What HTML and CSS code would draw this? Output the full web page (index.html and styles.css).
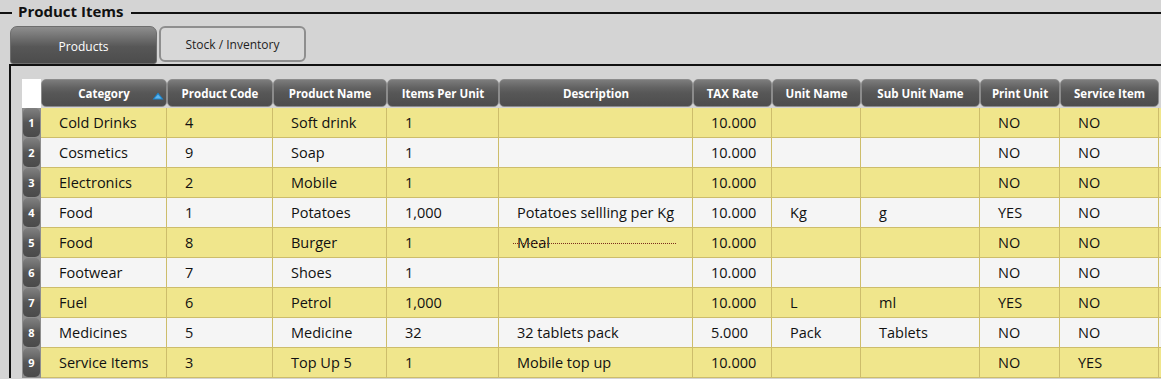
FILE: index.html
```html
<!DOCTYPE html>
<html>
<head>
    <link rel="stylesheet" href="styles.css">
</head>
<body>
<div class="group">
    <div class="legend-row">
        <span class="rule short"></span>
        <span class="legend">Product Items</span>
        <span class="rule long"></span>
    </div>
    <div class="tabs">
        <div class="tab active">Products</div>
        <div class="tab">Stock / Inventory</div>
    </div>
    <div class="panel">
        <table class="grid">
            <colgroup>
                <col class="c-rh">
                <col class="c-cat">
                <col class="c-code">
                <col class="c-name">
                <col class="c-ipu">
                <col class="c-desc">
                <col class="c-tax">
                <col class="c-unit">
                <col class="c-sub">
                <col class="c-print">
                <col class="c-serv">
                <col class="c-fill">
            </colgroup>
            <thead>
                <tr>
                    <th class="corner"></th>
                    <th class="sorted"><div class="hd">Category</div>
                        <svg class="sort-arrow" width="12" height="8" viewBox="0 0 12 8">
                            <polygon points="6,0.5 11.5,7.5 0.5,7.5" fill="#1b86d0"/>
                            <polygon points="6,2.5 9.5,6.5 2.5,6.5" fill="#5fb4ec"/>
                        </svg>
                    </th>
                    <th><div class="hd">Product Code</div></th>
                    <th><div class="hd">Product Name</div></th>
                    <th><div class="hd">Items Per Unit</div></th>
                    <th><div class="hd">Description</div></th>
                    <th><div class="hd">TAX Rate</div></th>
                    <th><div class="hd">Unit Name</div></th>
                    <th><div class="hd">Sub Unit Name</div></th>
                    <th><div class="hd">Print Unit</div></th>
                    <th><div class="hd">Service Item</div></th>
                    <th class="filler"></th>
                </tr>
            </thead>
            <tbody>
                <tr>
                    <td class="rh"><div class="num">1</div></td>
                    <td>Cold Drinks</td><td>4</td><td>Soft drink</td><td>1</td><td></td>
                    <td>10.000</td><td></td><td></td><td>NO</td><td>NO</td><td></td>
                </tr>
                <tr>
                    <td class="rh"><div class="num">2</div></td>
                    <td>Cosmetics</td><td>9</td><td>Soap</td><td>1</td><td></td>
                    <td>10.000</td><td></td><td></td><td>NO</td><td>NO</td><td></td>
                </tr>
                <tr>
                    <td class="rh"><div class="num">3</div></td>
                    <td>Electronics</td><td>2</td><td>Mobile</td><td>1</td><td></td>
                    <td>10.000</td><td></td><td></td><td>NO</td><td>NO</td><td></td>
                </tr>
                <tr>
                    <td class="rh"><div class="num">4</div></td>
                    <td>Food</td><td>1</td><td>Potatoes</td><td>1,000</td><td>Potatoes sellling per Kg</td>
                    <td>10.000</td><td>Kg</td><td>g</td><td>YES</td><td>NO</td><td></td>
                </tr>
                <tr>
                    <td class="rh"><div class="num">5</div></td>
                    <td>Food</td><td>8</td><td>Burger</td><td>1</td><td><span class="struck">Meal</span></td>
                    <td>10.000</td><td></td><td></td><td>NO</td><td>NO</td><td></td>
                </tr>
                <tr>
                    <td class="rh"><div class="num">6</div></td>
                    <td>Footwear</td><td>7</td><td>Shoes</td><td>1</td><td></td>
                    <td>10.000</td><td></td><td></td><td>NO</td><td>NO</td><td></td>
                </tr>
                <tr>
                    <td class="rh"><div class="num">7</div></td>
                    <td>Fuel</td><td>6</td><td>Petrol</td><td>1,000</td><td></td>
                    <td>10.000</td><td>L</td><td>ml</td><td>YES</td><td>NO</td><td></td>
                </tr>
                <tr>
                    <td class="rh"><div class="num">8</div></td>
                    <td>Medicines</td><td>5</td><td>Medicine</td><td>32</td><td>32 tablets pack</td>
                    <td>5.000</td><td>Pack</td><td>Tablets</td><td>NO</td><td>NO</td><td></td>
                </tr>
                <tr>
                    <td class="rh"><div class="num">9</div></td>
                    <td>Service Items</td><td>3</td><td>Top Up 5</td><td>1</td><td>Mobile top up</td>
                    <td>10.000</td><td></td><td></td><td>NO</td><td>YES</td><td></td>
                </tr>
            </tbody>
        </table>
    </div>
</div>
</body>
</html>
```

FILE: styles.css
```css
:root {
    --bg: #d4d4d4;
    --ink: #111;
    --row-odd: #f0e68c;
    --row-even: #f5f5f5;
    --grid-line: #cdbd6b;
    --head-border: #8c8c8c;
}

* {
    box-sizing: border-box;
}

body {
    margin: 0;
    width: 1161px;
    height: 379px;
    overflow: hidden;
    background: var(--bg);
    font-family: 'Open Sans', 'Noto Sans', sans-serif;
    color: var(--ink);
}

/* Group box title */
.legend-row {
    display: flex;
    align-items: flex-start;
    height: 26px;
}

.rule {
    height: 2px;
    margin-top: 12px;
    background: #111;
}

.rule.short {
    width: 12px;
}

.rule.long {
    flex: 1;
}

.legend {
    font-size: 15px;
    font-weight: 700;
    line-height: 20px;
    padding: 1px 7px 0 6px;
}

/* Tabs */
.tabs {
    display: flex;
    align-items: flex-start;
    gap: 2px;
    margin-left: 10px;
    height: 38px;
}

.tab {
    width: 147px;
    height: 36px;
    display: flex;
    align-items: center;
    justify-content: center;
    font-size: 12px;
    color: #1e1e1e;
    background: #d8d8d8;
    border: 2px solid #8e8e8e;
    border-radius: 6px;
}

.tab.active {
    height: 38px;
    color: #fff;
    border: 1px solid #6e6e6e;
    border-radius: 7px 7px 3px 3px;
    background: linear-gradient(#8e8e8e, #666 40%, #575757 55%, #4c4c4c);
    padding-top: 2px;
}

/* Grid panel */
.panel {
    margin-left: 9px;
    border-top: 2px solid #111;
    border-left: 2px solid #111;
    padding: 12px 0 0 11px;
}

.grid {
    table-layout: fixed;
    border-collapse: separate;
    border-spacing: 0;
    width: 1160px;
    font-size: 14.5px;
}

.c-rh { width: 19px; }
.c-cat { width: 126px; }
.c-code { width: 106px; }
.c-name { width: 114px; }
.c-ipu { width: 112px; }
.c-desc { width: 194px; }
.c-tax { width: 79px; }
.c-unit { width: 89px; }
.c-sub { width: 119px; }
.c-print { width: 80px; }
.c-serv { width: 99px; }
.c-fill { width: 23px; }

.grid th {
    height: 30px;
    padding: 1px 0 1px 0;
    position: relative;
}

.grid th.corner {
    padding: 0;
    background: #fff;
    border-top: 1px solid var(--bg);
}

.hd {
    height: 28px;
    display: flex;
    align-items: center;
    justify-content: center;
    border: 1px solid var(--head-border);
    border-radius: 5px;
    background: linear-gradient(#7c7c7c, #626262 30%, #575757 50%, #4d4d4d);
    color: #fff;
    font-size: 11.5px;
    font-weight: 700;
    white-space: nowrap;
}

.sort-arrow {
    position: absolute;
    right: 3px;
    top: 14px;
}

.grid td {
    height: 30px;
    padding: 0 4px 0 18px;
    border-right: 1px solid var(--grid-line);
    border-bottom: 1px solid var(--grid-line);
    white-space: nowrap;
    overflow: hidden;
}

.grid tbody tr:nth-child(odd) td {
    background: var(--row-odd);
}

.grid tbody tr:nth-child(even) td {
    background: var(--row-even);
}

.grid td.rh,
.grid tbody tr td.rh {
    padding: 0 1px 1px 1px;
    border: 0;
    background: #8e8e8e;
}

.num {
    height: 29px;
    display: flex;
    align-items: center;
    justify-content: center;
    border-radius: 5px;
    background: linear-gradient(#808080, #6a6a6a 30%, #565656 50%, #4a4a4a);
    color: #fff;
    font-size: 11px;
    font-weight: 700;
}

/* Stricken description */
.struck {
    position: relative;
}

.struck::after {
    content: '';
    position: absolute;
    left: -4px;
    top: 52%;
    width: 164px;
    height: 1px;
    background: repeating-linear-gradient(90deg, #7a2c1c 0 1px, transparent 1px 2px);
}
```
